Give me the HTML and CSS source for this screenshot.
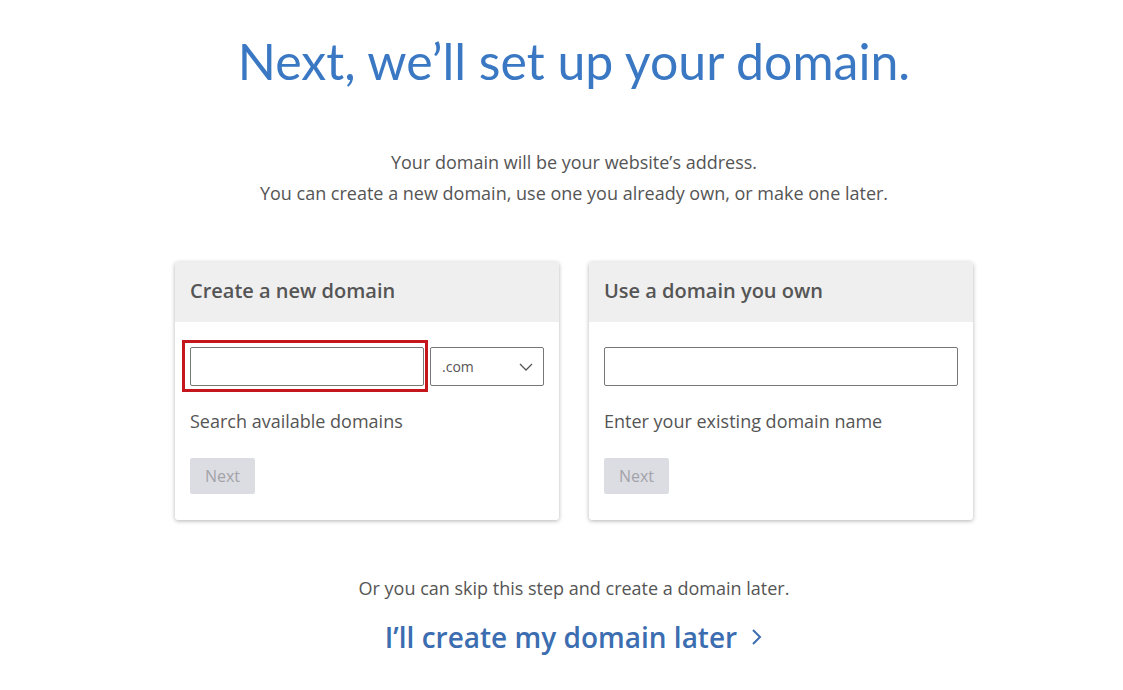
FILE: index.html
```html
<!DOCTYPE html>
<html lang="en">
<head>
  <meta charset="UTF-8">
  <meta name="viewport" content="width=device-width, initial-scale=1.0">
  <title>Set up your domain</title>
  <link rel="stylesheet" href="styles.css">
</head>
<body>

<div class="page">
  <h1>Next, we’ll set up your domain.</h1>
  <p class="intro">
    Your domain will be your website’s address.<br>
    You can create a new domain, use one you already own, or make one later.
  </p>

  <div class="domain-options">
    <div class="domain-card">
      <div class="card-head">Create a new domain</div>
      <div class="card-body">
        <div class="field-row">
          <div class="focus-ring">
            <input type="text" class="text-input">
          </div>
          <div class="tld-select">
            <span>.com</span>
            <svg width="14" height="8" viewBox="0 0 14 8"><path d="M1 1l6 6 6-6" fill="none" stroke="#555" stroke-width="1.3"/></svg>
          </div>
        </div>
        <p class="hint">Search available domains</p>
        <button class="next-btn" disabled>Next</button>
      </div>
    </div>

    <div class="domain-card">
      <div class="card-head">Use a domain you own</div>
      <div class="card-body">
        <div class="field-row">
          <input type="text" class="text-input wide">
        </div>
        <p class="hint">Enter your existing domain name</p>
        <button class="next-btn" disabled>Next</button>
      </div>
    </div>
  </div>

  <p class="skip">Or you can skip this step and create a domain later.</p>
  <a class="later-link" href="#">I’ll create my domain later
    <svg width="12" height="18" viewBox="0 0 12 18"><path d="M2 2l7 7-7 7" fill="none" stroke="#3b6db0" stroke-width="2"/></svg>
  </a>
</div>

</body>
</html>
```

FILE: styles.css
```css
body {
  margin: 0;
  padding: 0;
  font-family: "Open Sans", Arial, sans-serif;
  background-color: #fff;
  color: #555;
}

.page {
  padding-left: 25px;
  text-align: center;
}

h1 {
  font-family: Lato, "Open Sans", sans-serif;
  font-weight: 400;
  font-size: 50px;
  color: #3a78c3;
  margin: 0;
  padding-top: 31px;
  line-height: 60px;
}

.intro {
  font-size: 18px;
  line-height: 31px;
  color: #555;
  margin: 56px 0 0;
}

.domain-options {
  display: flex;
  justify-content: center;
  gap: 30px;
  margin-top: 53px;
  text-align: left;
}

.domain-card {
  width: 384px;
  border-radius: 3px;
  box-shadow: 0 1px 4px rgba(0, 0, 0, 0.3);
  background-color: #fff;
  overflow: hidden;
}

.card-head {
  background-color: #efefef;
  height: 60px;
  line-height: 58px;
  padding: 0 15px;
  font-size: 20px;
  font-weight: 600;
  color: #555;
}

.card-body {
  padding: 25px 15px 26px;
}

.field-row {
  display: flex;
  gap: 6px;
}

/* focus ring sits a bit wider on the left/top than on the right */
.focus-ring {
  display: flex;
  padding: 4px 1px 3px 5px;
  margin: -4px -1px -3px -5px;
  outline: 3px solid #c5161d;
}

.text-input {
  width: 234px;
  height: 39px;
  box-sizing: border-box;
  border: 1px solid #777;
  border-radius: 2px;
  padding: 0 10px;
  font-size: 16px;
  margin: 0;
}

.text-input.wide {
  width: 100%;
}

.tld-select {
  flex: 1;
  height: 39px;
  box-sizing: border-box;
  border: 1px solid #777;
  border-radius: 2px;
  display: flex;
  align-items: center;
  justify-content: space-between;
  padding: 0 10px 0 11px;
  font-size: 14px;
  color: #555;
}

.hint {
  font-size: 18px;
  color: #555;
  margin: 23px 0 25px;
  line-height: 24px;
}

.next-btn {
  font-family: "Open Sans", Arial, sans-serif;
  background-color: #dcdde3;
  color: #a3a3a8;
  border: none;
  border-radius: 2px;
  width: 65px;
  height: 36px;
  font-size: 16px;
  padding: 0;
}

.skip {
  font-size: 18px;
  color: #555;
  margin: 56px 0 0;
  line-height: 24px;
}

.later-link {
  display: inline-flex;
  align-items: center;
  gap: 14px;
  margin-top: 18px;
  font-size: 28px;
  font-weight: 600;
  color: #3b6db0;
  text-decoration: none;
}
```
